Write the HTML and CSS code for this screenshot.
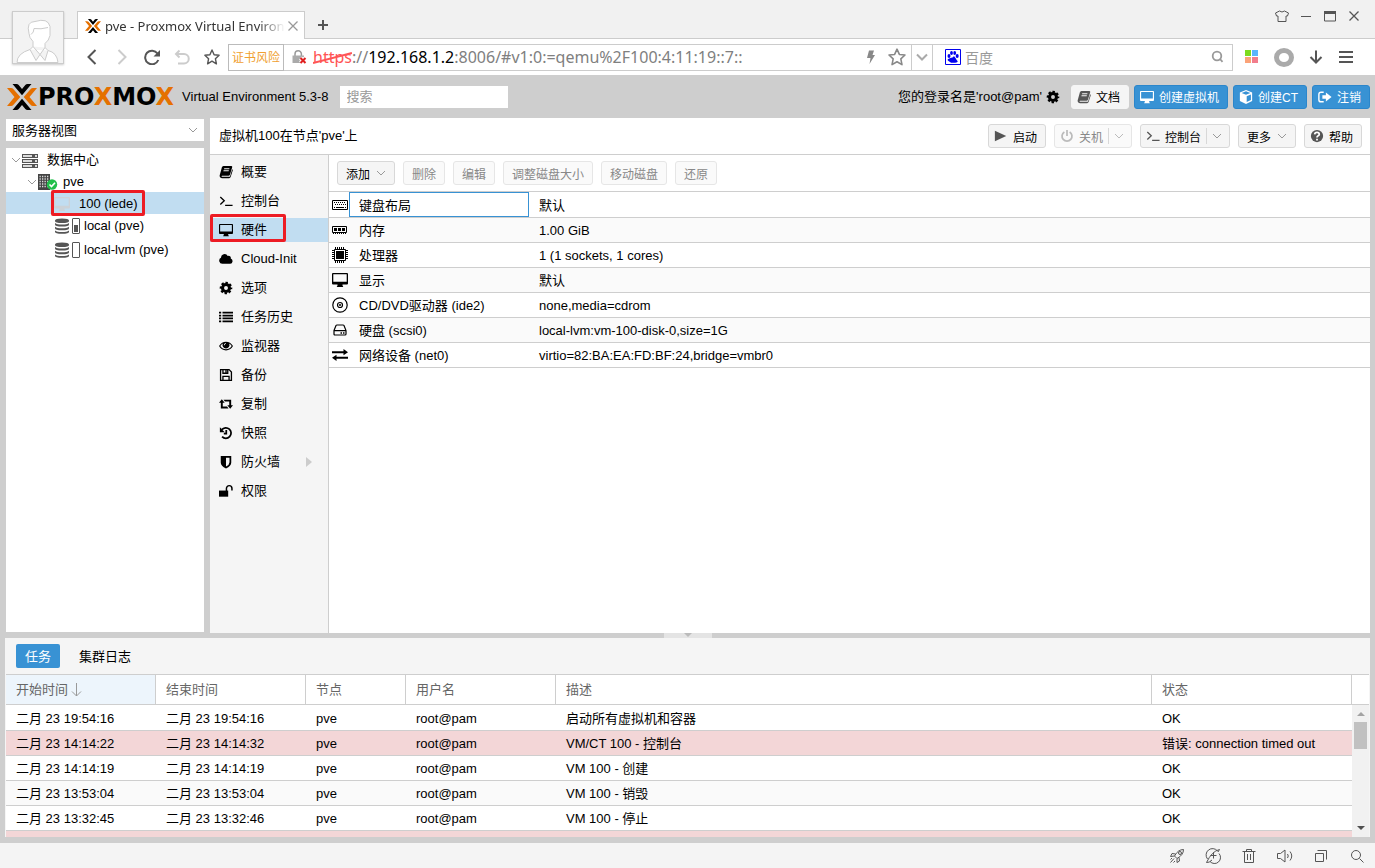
FILE: index.html
```html
<!DOCTYPE html>
<html lang="zh-CN">
<head>
    <meta charset="UTF-8">
    <meta name="viewport" content="width=device-width, initial-scale=1.0">
    <title>pve - Proxmox Virtual Environment</title>
    <link rel="stylesheet" href="styles.css">
</head>
<body>
    <!-- icon sprite -->
    <svg class="sprite" aria-hidden="true">
        <symbol id="i-logo" viewBox="0 0 30 26">
            <path fill="#e57000" d="M0 4H4Q5.500 4 6.500 5.200L13.300 13L6.500 20.800Q5.500 22 4 22H0L7.500 13zM30 4H26Q24.500 4 23.500 5.200L16.700 13L23.500 20.800Q24.500 22 26 22H30L22.500 13z"/>
            <path fill="#000" d="M5.500 0H9.500Q10.800 0 11.700 1L15 5L18.300 1Q19.200 0 20.500 0H24.500L15 11.300zM5.500 26H9.500Q10.800 26 11.700 25L15 21L18.300 25Q19.200 26 20.500 26H24.500L15 14.700z"/>
        </symbol>
        <symbol id="i-down" viewBox="0 0 12 12"><path fill="none" stroke="currentColor" d="M2 4l4 4 4-4"/></symbol>
        <symbol id="i-book" viewBox="0 0 16 16"><path fill-rule="evenodd" d="M5 1h9.200q1.300.2.900 1.600l-2.600 8.400q-.4 1.200-1.600 1.200H3.600q-.8.1-.7.7.2.6 1.100.6h7.800q.6 0 .9-.6l2.400-8q.9.4.6 1.500l-2.400 7.400q-.5 1.200-1.700 1.200H3.400q-2 0-2.600-1.900-.2-.7 0-1.400L3.400 2.400Q3.800 1.200 5 1zM6 3.800l-.3 1h6l.3-1zM5.300 6.100l-.3 1h6l.3-1z"/></symbol>
        <symbol id="i-terminal" viewBox="0 0 16 16"><path fill="none" stroke="currentColor" stroke-width="1.500" d="M1.500 3.500L6 7.800L1.500 12M7 13h8.500"/></symbol>
        <symbol id="i-desktop" viewBox="0 0 16 16"><path fill-rule="evenodd" d="M1 1h14a1 1 0 0 1 1 1v9.500a1 1 0 0 1-1 1h-4.500v1l.8 1.500H4.700l.8-1.500v-1H1a1 1 0 0 1-1-1V2a1 1 0 0 1 1-1zM1.300 2.300v7.500h13.400V2.300z"/></symbol>
        <symbol id="i-cloud" viewBox="0 0 16 16"><path d="M3.800 13.500A3.600 3.600 0 0 1 2.200 6.700A4.200 4.200 0 0 1 10 4.500A2.500 2.500 0 0 1 13.400 7.500A3.100 3.100 0 0 1 12.800 13.500z"/></symbol>
        <symbol id="i-gear" viewBox="0 0 16 16"><g fill="none" stroke="currentColor"><circle cx="8" cy="8" r="4" stroke-width="3.500"/><circle cx="8" cy="8" r="6" stroke-width="2.400" stroke-dasharray="2.700 2.012" stroke-dashoffset="1.350"/></g></symbol>
        <symbol id="i-list" viewBox="0 0 16 16"><path d="M0 2h2.500v2H0zM4 2h12v2H4zM0 5.300h2.500v2H0zM4 5.300h12v2H4zM0 8.600h2.500v2H0zM4 8.600h12v2H4zM0 12h2.500v2H0zM4 12h12v2H4z"/></symbol>
        <symbol id="i-eye" viewBox="0 0 16 16"><path fill-rule="evenodd" d="M8 3Q13 3 16 8Q13 13 8 13T0 8Q3 3 8 3zM1.500 8Q4 11.800 8 11.800T14.500 8Q13.300 6 11.500 5A4 4 0 1 1 4.500 5Q2.700 6 1.500 8zM8 4.500A2.700 2.700 0 0 0 5.500 7.200h1A1.800 1.800 0 0 1 8 5.500z"/></symbol>
        <symbol id="i-save" viewBox="0 0 16 16"><path fill="none" stroke="currentColor" stroke-width="1.500" d="M1.800 1.800h9.700l2.700 2.700v9.700H1.800zM4.500 14V9.500h7V14M4.500 2v4h5.500V2M8 2.500v2.500"/></symbol>
        <symbol id="i-retweet" viewBox="0 0 16 16"><path d="M3.200 2.500L6.500 6.500H4.300V10.800H9.200L10.900 13H2.100V6.500H0zM12.800 13.500L9.500 9.500H11.700V5.200H6.800L5.100 3H13.900V9.500H16z"/></symbol>
        <symbol id="i-history" viewBox="0 0 16 16"><path fill="none" stroke="currentColor" stroke-width="2" d="M3.200 4.200A6 6 0 1 1 3.500 12.200M8.300 4.500V8.700H5.500"/><path d="M1 1.500V7h5.500z"/></symbol>
        <symbol id="i-shield" viewBox="0 0 16 16"><path fill-rule="evenodd" d="M2 1h12v7.500Q14 12.500 8 15.500Q2 12.500 2 8.500zM8 3v10.200Q12 11 12 8.300V3z"/></symbol>
        <symbol id="i-unlock" viewBox="0 0 16 16"><path d="M0 7.500h10.500V14.500H0z"/><path fill="none" stroke="currentColor" stroke-width="1.700" d="M8.500 8V5A3 3 0 0 1 14.800 5V7.500"/></symbol>
        <symbol id="i-play" viewBox="0 0 16 16"><path d="M1 2L14 8L1 14z"/></symbol>
        <symbol id="i-power" viewBox="0 0 16 16"><path fill="none" stroke="currentColor" stroke-width="2" d="M5 3.300A5.700 5.700 0 1 0 11 3.300M8 1V8"/></symbol>
        <symbol id="i-help" viewBox="0 0 16 16"><circle cx="8" cy="8" r="7"/><path fill="none" stroke="#fff" stroke-width="2" d="M5.300 6.200Q5.500 3.800 8 3.800T10.600 6Q10.600 7.200 9 8Q8 8.500 8 9.800M8 11v2"/></symbol>
        <symbol id="i-cube" viewBox="0 0 16 16"><path fill-rule="evenodd" d="M8 0L15 2.800V12.500L8 16L1 12.500V2.800zM8 1.500L3 3.500L8 5.500L13 3.500zM8.800 7V13.800L13.600 11.500V5z"/></symbol>
        <symbol id="i-logout" viewBox="0 0 16 16"><path fill="none" stroke="currentColor" stroke-width="1.600" d="M6.500 2.500H3.500Q1 2.500 1 5V11Q1 13.500 3.500 13.500H6.500"/><path d="M5 6h4V2.800L15.500 8L9 13.200V10H5z"/></symbol>
        <symbol id="i-server" viewBox="0 0 16 16"><path fill="#555" d="M0 2h16v4H0zM0 7h16v4H0zM0 12h16v4H0z"/><path fill="#ddd" d="M1 3h9v2H1zM1 8h9v2H1zM1 13h9v2H1zM13 3h2v2h-2zM13 8h2v2h-2zM13 13h2v2h-2z"/></symbol>
        <symbol id="i-node" viewBox="0 0 20 16"><path fill="#444" d="M0 0h12v16H0z"/><path stroke="#ddd" stroke-width="1.300" stroke-dasharray="1.300 1.200" d="M1.500 2.500h9.500M1.500 5h9.500M1.500 7.500h9.500M1.500 10h9.500M1.500 12.500h9.500"/><circle cx="14" cy="10.500" r="5.200" fill="#21bf4b"/><path fill="none" stroke="#fff" stroke-width="1.600" d="M11.500 10.500l2 2 3.500-3.800"/></symbol>
        <symbol id="i-db" viewBox="0 0 16 16"><path fill="#555" d="M1 2.500Q1 .5 8 .5T15 2.500V3Q15 5 8 5T1 3zM1 5Q3 6.500 8 6.500T15 5V6.500Q15 8.500 8 8.500T1 6.500zM1 8.700Q3 10.200 8 10.200T15 8.700V10.200Q15 12.200 8 12.200T1 10.200zM1 12.400Q3 13.900 8 13.900T15 12.400V13.800Q15 15.800 8 15.800T1 13.800z"/></symbol>
        <symbol id="i-keyboard" viewBox="0 0 16 16"><path fill="none" stroke="currentColor" d="M.5 3.500h15v9H.5zM4 10.500h8"/><path stroke="currentColor" stroke-dasharray="1 1" d="M2 5.500h12M3 7.500h11"/><path d="M2 10h1v1H2zM13 10h1v1h-1z"/></symbol>
        <symbol id="i-memory" viewBox="0 0 16 16"><path fill="none" stroke="currentColor" d="M.5 4.500h14v6H.5z"/><path d="M2 6h3v3H2zM6 6h3v3H6zM10 6h3v3h-3z"/><path stroke="currentColor" stroke-dasharray="1 1" d="M1 11.500h14"/></symbol>
        <symbol id="i-cpu" viewBox="0 0 16 16"><path fill="none" stroke="currentColor" d="M2.500 2.500h11v11h-11z"/><path d="M4 4h8v8H4z"/><g stroke="currentColor" stroke-width="2" stroke-dasharray="1 1"><path d="M3 1h10M3 15h10M1 3v10M15 3v10"/></g></symbol>
        <symbol id="i-cd" viewBox="0 0 16 16"><g fill="none" stroke="currentColor" stroke-width="1.200"><circle cx="8" cy="8" r="7.200"/><circle cx="8" cy="8" r="2.500"/></g><circle cx="8" cy="8" r="1"/></symbol>
        <symbol id="i-hdd" viewBox="0 0 16 16"><path fill="none" stroke="currentColor" stroke-width="1.200" d="M2 8.500L4 3.500Q4.300 3 5 3H11Q11.700 3 12 3.500L14 8.500V12Q14 13 13 13H3Q2 13 2 12zM2 8.700H14"/><path d="M8.500 10.300H10v1.400H8.500zM11 10.300h1.500v1.400H11z"/></symbol>
        <symbol id="i-exchange" viewBox="0 0 16 16"><path d="M0 4.200H11.500V2L16 5.200L11.500 8.300V6.200H0zM16 9.800H4.500V7.700L0 10.800L4.500 14V11.800H16z"/></symbol>
        <symbol id="i-star" viewBox="0 0 16 16"><path fill="none" stroke="currentColor" stroke-width="1.400" stroke-linejoin="round" d="M8 1l2.100 4.700 5 .5-3.700 3.500 1 5.100L8 12.200l-4.400 2.600 1-5.100L.9 6.200l5-.5z"/></symbol>
        <symbol id="i-search" viewBox="0 0 16 16"><g fill="none" stroke="currentColor" stroke-width="1.800"><circle cx="7" cy="7" r="4.300"/><path d="M10 10L12.500 12.800"/></g></symbol>
        <symbol id="i-close" viewBox="0 0 16 16"><path fill="none" stroke="currentColor" stroke-width="1.300" d="M3.500 3.500l9 9M12.500 3.500l-9 9"/></symbol>
    </svg>

    <!-- browser chrome -->
    <header class="chrome">
        <div class="avatar">
            <svg viewBox="0 0 50 50"><path fill="#fff" stroke="#ccc" d="M4 50Q4 41 17 37L20 34V29Q16 25 16 21Q13 9 22 9Q35 5 37 14V23Q36 28 32 31V35L35 38Q44 40 45 50zM18 22Q21 20 21 16Q28 17 35 15M20 34L27 42L32 35M17 37L23 48L27 42L32 48L35 38"/></svg>
        </div>
        <div class="tab-strip">
            <div class="tab">
                <svg class="ico"><use href="#i-logo"/></svg>
                <span class="tab-title">pve - Proxmox Virtual Environ</span>
                <button class="plain tab-close" aria-label="关闭标签"><svg class="ico"><use href="#i-close"/></svg></button>
            </div>
            <button class="plain new-tab" aria-label="新标签"><svg class="ico" viewBox="0 0 16 16"><path stroke="currentColor" stroke-width="2" d="M8 3v10M3 8h10"/></svg></button>
            <div class="win-buttons">
                <button class="plain" aria-label="皮肤"><svg class="ico" viewBox="0 0 16 16"><path fill="none" stroke="currentColor" d="M5.500 3Q8 5 10.500 3L14.500 5L13.500 8H12V13.500H4V8H2.500L1.500 5z"/></svg></button>
                <button class="plain" aria-label="最小化"><svg class="ico" viewBox="0 0 16 16"><path stroke="currentColor" d="M3 8.500h10"/></svg></button>
                <button class="plain" aria-label="最大化"><svg class="ico" viewBox="0 0 16 16"><path fill="none" stroke="currentColor" d="M2.500 4v9h11V4"/><path d="M2 3h12v3H2z"/></svg></button>
                <button class="plain" aria-label="关闭"><svg class="ico"><use href="#i-close"/></svg></button>
            </div>
        </div>
        <div class="nav-bar">
            <div class="nav-buttons">
                <button class="plain" aria-label="后退"><svg class="ico" viewBox="0 0 16 16"><path fill="none" stroke="currentColor" stroke-width="2" d="M11.500 1L4.500 8L11.500 15"/></svg></button>
                <button class="plain faint" aria-label="前进"><svg class="ico" viewBox="0 0 16 16"><path fill="none" stroke="currentColor" stroke-width="2" d="M4.500 1L11.500 8L4.500 15"/></svg></button>
                <button class="plain" aria-label="刷新"><svg class="ico" viewBox="0 0 16 16"><path fill="none" stroke="currentColor" stroke-width="2" d="M13.500 4.500A6.800 6.800 0 1 0 14.300 11"/><path d="M16 1v6.500H9.500z"/></svg></button>
                <button class="plain faint" aria-label="恢复"><svg class="ico" viewBox="0 0 16 16"><path fill="none" stroke="currentColor" stroke-width="2" d="M5.500 1.500L2 5L5.500 8.500M2 5H10A4.500 4.500 0 0 1 10 14.500H4"/></svg></button>
                <button class="plain" aria-label="收藏"><svg class="ico"><use href="#i-star"/></svg></button>
            </div>
            <div class="url-box">
                <span class="cert">证书风险</span>
                <svg class="ico lock" viewBox="0 0 16 16"><path fill="none" stroke="#999" stroke-width="1.500" d="M4 8V5A3.200 3.200 0 0 1 10.400 5V8"/><path fill="#aaa" d="M1.500 6.500h11.500V14H1.500z"/><path fill="none" stroke="#fff" stroke-width="4" d="M9.500 9l5 5M14.500 9l-5 5"/><path fill="none" stroke="#e02020" stroke-width="2" d="M9.500 9l5 5M14.500 9l-5 5"/></svg>
                <div class="url" role="textbox" contenteditable="true" spellcheck="false"><span class="scheme">https<svg class="strike" viewBox="0 0 40 14" preserveAspectRatio="none"><path stroke="#f55" stroke-width="2" d="M0 12L40 2"/></svg></span>://<b>192.168.1.2</b>:8006/#v1:0:=qemu%2F100:4:11:19::7::</div>
                <svg class="ico bolt" viewBox="0 0 16 16"><path d="M6 1.500h5L9.500 6H12L6.500 15L7.500 9H4z"/></svg>
                <svg class="ico url-star"><use href="#i-star"/></svg>
                <button class="plain url-menu" aria-label="地址列表"><svg class="ico" viewBox="0 0 16 16"><path fill="none" stroke="currentColor" stroke-width="2" d="M3 5.500l5 5 5-5"/></svg></button>
            </div>
            <label class="web-search">
                <svg class="ico" viewBox="0 0 16 16"><path fill="none" stroke="#00e" d="M.5.5h15v15H.5z"/><g fill="#00e"><ellipse cx="4" cy="7" rx="1.500" ry="2"/><ellipse cx="6.500" cy="4" rx="1.400" ry="1.900"/><ellipse cx="9.700" cy="4" rx="1.400" ry="1.900"/><ellipse cx="12.200" cy="7" rx="1.500" ry="2"/><path d="M8 7Q9.500 7 10.500 9T12.500 12T10 13.800H6T3.500 12T5.500 9T8 7z"/></g></svg>
                <input type="text" placeholder="百度">
                <svg class="ico"><use href="#i-search"/></svg>
            </label>
            <div class="nav-tools">
                <button class="plain" aria-label="应用"><svg class="ico" viewBox="0 0 16 16"><path fill="#7ddb1e" d="M1 1h6v6H1z"/><path fill="#5bb5fb" d="M8 1h6v6H8z"/><path fill="#fba378" d="M1 8h6v6H1z"/><path fill="#f27d8c" d="M8 8h6v6H8z"/></svg></button>
                <button class="plain ring" aria-label="账户"></button>
                <button class="plain" aria-label="下载"><svg class="ico" viewBox="0 0 16 16"><path fill="none" stroke="currentColor" stroke-width="2" d="M8 1.500V13.500M2.500 8L8 13.500L13.500 8"/></svg></button>
                <button class="plain" aria-label="菜单"><svg class="ico" viewBox="0 0 16 16"><path stroke="currentColor" stroke-width="2" d="M1 3h14M1 8h14M1 13h14"/></svg></button>
            </div>
        </div>
    </header>

    <div class="app">
        <div class="app-header">
            <svg class="logo-mark"><use href="#i-logo"/></svg>
            <span class="logo-text">PRO<i>X</i>MO<i>X</i></span>
            <span class="version">Virtual Environment 5.3-8</span>
            <input class="search" type="text" placeholder="搜索" aria-label="搜索">
            <span class="login">您的登录名是'root@pam'</span>
            <svg class="ico gear"><use href="#i-gear"/></svg>
            <div class="header-buttons">
                <button class="btn flat"><svg class="ico"><use href="#i-book"/></svg>文档</button>
                <button class="btn primary"><svg class="ico"><use href="#i-desktop"/></svg>创建虚拟机</button>
                <button class="btn primary"><svg class="ico"><use href="#i-cube"/></svg>创建CT</button>
                <button class="btn primary"><svg class="ico"><use href="#i-logout"/></svg>注销</button>
            </div>
        </div>

        <div class="workspace">
            <!-- resource tree -->
            <aside class="side">
                <div class="combo">
                    <select aria-label="视图"><option>服务器视图</option></select>
                    <svg class="chev"><use href="#i-down"/></svg>
                </div>
                <ul class="tree">
                    <li class="node"><svg class="chev"><use href="#i-down"/></svg><span class="node-icon"><svg class="ico"><use href="#i-server"/></svg></span>数据中心</li>
                    <li class="node level-1"><svg class="chev"><use href="#i-down"/></svg><span class="node-icon"><svg class="ico wide"><use href="#i-node"/></svg></span>pve</li>
                    <li class="node level-2 selected"><span class="node-icon vm-off"><svg class="ico"><use href="#i-desktop"/></svg></span>100 (lede)<span class="mark"></span></li>
                    <li class="node level-2 storage"><span class="node-icon"><svg class="ico"><use href="#i-db"/></svg><span class="usage"><span class="usage-fill" style="height: 55%"></span></span></span>local (pve)</li>
                    <li class="node level-2 storage"><span class="node-icon"><svg class="ico"><use href="#i-db"/></svg><span class="usage"></span></span>local-lvm (pve)</li>
                </ul>
            </aside>

            <!-- vm panel -->
            <main class="panel">
                <div class="panel-title">
                    <span>虚拟机100在节点'pve'上</span>
                    <div class="panel-buttons">
                        <button class="btn"><svg class="ico"><use href="#i-play"/></svg>启动</button>
                        <button class="btn" disabled><svg class="ico"><use href="#i-power"/></svg>关机<span class="split"><svg class="chev"><use href="#i-down"/></svg></span></button>
                        <button class="btn"><svg class="ico"><use href="#i-terminal"/></svg>控制台<span class="split"><svg class="chev"><use href="#i-down"/></svg></span></button>
                        <button class="btn text">更多<svg class="chev"><use href="#i-down"/></svg></button>
                        <button class="btn"><svg class="ico"><use href="#i-help"/></svg>帮助</button>
                    </div>
                </div>
                <div class="panel-body">
                    <nav class="menu">
                        <a href="#"><svg class="ico"><use href="#i-book"/></svg>概要</a>
                        <a href="#"><svg class="ico"><use href="#i-terminal"/></svg>控制台</a>
                        <a href="#" class="selected"><svg class="ico"><use href="#i-desktop"/></svg>硬件<span class="mark"></span></a>
                        <a href="#"><svg class="ico"><use href="#i-cloud"/></svg>Cloud-Init</a>
                        <a href="#"><svg class="ico"><use href="#i-gear"/></svg>选项</a>
                        <a href="#"><svg class="ico"><use href="#i-list"/></svg>任务历史</a>
                        <a href="#"><svg class="ico"><use href="#i-eye"/></svg>监视器</a>
                        <a href="#"><svg class="ico"><use href="#i-save"/></svg>备份</a>
                        <a href="#"><svg class="ico"><use href="#i-retweet"/></svg>复制</a>
                        <a href="#"><svg class="ico"><use href="#i-history"/></svg>快照</a>
                        <a href="#"><svg class="ico"><use href="#i-shield"/></svg>防火墙<span class="more"></span></a>
                        <a href="#"><svg class="ico"><use href="#i-unlock"/></svg>权限</a>
                    </nav>
                    <section class="hardware">
                        <div class="toolbar">
                            <button class="btn text">添加<svg class="chev"><use href="#i-down"/></svg></button>
                            <button class="btn text" disabled>删除</button>
                            <button class="btn text" disabled>编辑</button>
                            <button class="btn text" disabled>调整磁盘大小</button>
                            <button class="btn text" disabled>移动磁盘</button>
                            <button class="btn text" disabled>还原</button>
                        </div>
                        <table class="hw-table">
                            <tr><td class="hw-icon"><svg class="ico"><use href="#i-keyboard"/></svg></td><td class="hw-name focused">键盘布局</td><td>默认</td></tr>
                            <tr><td class="hw-icon"><svg class="ico"><use href="#i-memory"/></svg></td><td class="hw-name">内存</td><td>1.00 GiB</td></tr>
                            <tr><td class="hw-icon"><svg class="ico"><use href="#i-cpu"/></svg></td><td class="hw-name">处理器</td><td>1 (1 sockets, 1 cores)</td></tr>
                            <tr><td class="hw-icon"><svg class="ico"><use href="#i-desktop"/></svg></td><td class="hw-name">显示</td><td>默认</td></tr>
                            <tr><td class="hw-icon"><svg class="ico"><use href="#i-cd"/></svg></td><td class="hw-name">CD/DVD驱动器 (ide2)</td><td>none,media=cdrom</td></tr>
                            <tr><td class="hw-icon"><svg class="ico"><use href="#i-hdd"/></svg></td><td class="hw-name">硬盘 (scsi0)</td><td>local-lvm:vm-100-disk-0,size=1G</td></tr>
                            <tr><td class="hw-icon"><svg class="ico"><use href="#i-exchange"/></svg></td><td class="hw-name">网络设备 (net0)</td><td>virtio=82:BA:EA:FD:BF:24,bridge=vmbr0</td></tr>
                        </table>
                    </section>
                </div>
            </main>
        </div>

        <div class="splitter"><span class="grip"></span></div>

        <!-- task log -->
        <section class="log">
            <div class="log-tabs">
                <button class="log-tab active">任务</button>
                <button class="log-tab">集群日志</button>
            </div>
            <div class="log-grid">
                <div class="log-rows">
                    <table class="log-table">
                        <thead>
                            <tr>
                                <th class="col-time sorted">开始时间<svg class="sort" viewBox="0 0 12 14"><path fill="none" stroke="currentColor" d="M6.500 0v13M2 8.500L6.500 13l4.500-4.500"/></svg></th>
                                <th class="col-time">结束时间</th>
                                <th class="col-node">节点</th>
                                <th class="col-user">用户名</th>
                                <th>描述</th>
                                <th class="col-status">状态</th>
                            </tr>
                        </thead>
                        <tbody>
                            <tr><td>二月 23 19:54:16</td><td>二月 23 19:54:16</td><td>pve</td><td>root@pam</td><td>启动所有虚拟机和容器</td><td>OK</td></tr>
                            <tr class="error"><td>二月 23 14:14:22</td><td>二月 23 14:14:32</td><td>pve</td><td>root@pam</td><td>VM/CT 100 - 控制台</td><td>错误: connection timed out</td></tr>
                            <tr><td>二月 23 14:14:19</td><td>二月 23 14:14:19</td><td>pve</td><td>root@pam</td><td>VM 100 - 创建</td><td>OK</td></tr>
                            <tr><td>二月 23 13:53:04</td><td>二月 23 13:53:04</td><td>pve</td><td>root@pam</td><td>VM 100 - 销毁</td><td>OK</td></tr>
                            <tr><td>二月 23 13:32:45</td><td>二月 23 13:32:46</td><td>pve</td><td>root@pam</td><td>VM 100 - 停止</td><td>OK</td></tr>
                            <tr class="error"><td></td><td></td><td></td><td></td><td></td><td></td></tr>
                        </tbody>
                    </table>
                </div>
                <div class="scroll-col">
                    <div class="scroll-head"></div>
                    <div class="scrollbar"><span class="arrow-up"></span><span class="thumb"></span><span class="arrow-down"></span></div>
                </div>
            </div>
        </section>
    </div>

    <footer class="status-bar">
        <button class="plain" aria-label="加速"><svg class="ico" viewBox="0 0 16 16"><path fill="none" stroke="currentColor" d="M14.500 1.500Q9 1.500 5.500 8L8 10.500Q14.500 7 14.500 1.500zM6.500 6L3 5.500L1.500 8.500L5.500 8M10 9.500L10.500 13L8 14.500L8 10.500M5 10.500L1.500 14.500M3 10L1.500 11.500M6 13L4.500 14.500"/><circle cx="11" cy="5" r="1.500" fill="none" stroke="currentColor"/></svg></button>
        <button class="plain" aria-label="浏览医生"><svg class="ico" viewBox="0 0 16 16"><path fill="none" stroke="currentColor" d="M12.500 3A6 6 0 0 0 2.500 11M14 5.500A6 6 0 0 1 5 13.500M1.500 14.500Q7 3 14.500 1.500L13 4M8.500 4.500v6M5.500 7.500h6M1.500 14.500Q4 15 7 12"/></svg></button>
        <button class="plain" aria-label="清理"><svg class="ico" viewBox="0 0 16 16"><path fill="none" stroke="currentColor" d="M1.500 3.500h13M5.500 3V1.500h5V3M3.500 3.500v11h9v-11M6.500 6v6M9.500 6v6"/></svg></button>
        <button class="plain" aria-label="声音"><svg class="ico" viewBox="0 0 16 16"><path fill="none" stroke="currentColor" d="M.5 5.500h3L8 2v12L3.500 10.500h-3zM10.500 6Q12 8 10.500 10M13 3.500Q16.500 8 13 12.500"/></svg></button>
        <button class="plain" aria-label="窗口"><svg class="ico" viewBox="0 0 16 16"><path fill="none" stroke="currentColor" d="M2.500 5.500h8v8h-8zM4.500 2.500h9v9"/></svg></button>
        <button class="plain" aria-label="缩放"><svg class="ico" viewBox="0 0 16 16"><path fill="none" stroke="currentColor" d="M10.500 10.500L14.500 14.500"/><circle cx="7" cy="7" r="4.500" fill="none" stroke="currentColor"/></svg></button>
    </footer>
</body>
</html>
```
FILE: styles.css
```css
* {
    margin: 0;
    padding: 0;
    box-sizing: border-box;
}

body {
    display: flex;
    flex-direction: column;
    height: 100vh;
    min-height: 600px;
    overflow: hidden;
    font-family: "Liberation Sans", "Noto Sans CJK SC", sans-serif;
    font-size: 13px;
    line-height: 20px;
    color: #000;
    background-color: #cecece;
}

button, input, select {
    font-family: inherit;
    font-size: inherit;
}

.sprite {
    position: absolute;
    width: 0;
    height: 0;
}

.ico {
    flex: none;
    width: 16px;
    height: 16px;
    fill: currentColor;
}

.chev {
    flex: none;
    width: 12px;
    height: 12px;
    color: #999;
}

.plain {
    display: flex;
    align-items: center;
    justify-content: center;
    border: none;
    background: none;
    color: #555;
}

/* browser chrome */
.chrome {
    position: relative;
    flex: none;
    font-family: "Noto Sans", "Noto Sans CJK SC", sans-serif;
    background-color: #fff;
}

.avatar {
    position: absolute;
    left: 12px;
    top: 11px;
    width: 52px;
    height: 53px;
    border: 1px solid #ccc;
    background-color: #f3f3f3;
    box-shadow: 0 1px 2px rgba(0, 0, 0, 0.2);
}

.avatar svg {
    display: block;
    width: 50px;
    height: 51px;
}

.tab-strip {
    display: flex;
    align-items: flex-end;
    height: 39px;
    padding-left: 77px;
    background-color: #f1f1f1;
    box-shadow: inset 0 -1px #ccc;
}

.tab {
    display: flex;
    align-items: center;
    width: 228px;
    height: 28px;
    padding: 0 7px;
    border: 1px solid #ccc;
    border-bottom: none;
    background-color: #fff;
}

.tab-title {
    flex: 1;
    margin-left: 4px;
    white-space: nowrap;
    color: #333;
    -webkit-mask-image: linear-gradient(to right, #000 85%, transparent);
    mask-image: linear-gradient(to right, #000 85%, transparent);
}

.tab-close {
    color: #999;
}

.new-tab {
    width: 36px;
    height: 28px;
}

.win-buttons {
    display: flex;
    gap: 8px;
    margin-left: auto;
    padding-right: 13px;
    align-self: flex-start;
    padding-top: 8px;
}

.nav-bar {
    display: flex;
    align-items: center;
    height: 36px;
    padding-left: 84px;
}

.nav-buttons {
    display: flex;
    gap: 14px;
    width: 144px;
}

.faint {
    color: #ccc;
}

.url-box {
    display: flex;
    align-items: center;
    flex: 1;
    height: 27px;
    border: 1px solid #ccc;
    min-width: 0;
}

.cert {
    height: 27px;
    padding: 0 3px;
    border: 1px solid #bbb;
    margin-left: -1px;
    font-size: 12px;
    line-height: 25px;
    color: #f0a030;
}

.lock {
    margin: 0 6px 0 7px;
}

.url {
    flex: 1;
    overflow: hidden;
    white-space: nowrap;
    font-size: 16px;
    color: #808080;
}

.url b {
    font-weight: normal;
    color: #000;
}

.scheme {
    position: relative;
    color: #f55;
}

.strike {
    position: absolute;
    left: 0;
    top: 5px;
    width: 100%;
    height: 14px;
}

.bolt {
    margin-right: 9px;
    color: #888;
}

.url-star {
    width: 18px;
    height: 18px;
    margin-right: 5px;
    color: #888;
}

.url-menu {
    width: 21px;
    height: 25px;
    border-left: 1px solid #ccc;
    color: #aaa;
}

.web-search {
    display: flex;
    align-items: center;
    width: 300px;
    height: 27px;
    padding: 0 6px 0 12px;
    border: 1px solid #ccc;
    border-left: none;
    color: #999;
}

.web-search input {
    flex: 1;
    min-width: 0;
    margin-left: 4px;
    border: none;
    font-size: 14px;
}

.web-search input::placeholder {
    color: #999;
}

.nav-tools {
    display: flex;
    align-items: center;
    gap: 14px;
    padding: 0 21px 0 11px;
}

.ring {
    width: 20px;
    height: 19px;
    border: 5px solid #aaa;
    border-radius: 50%;
}

/* application */
.app {
    display: flex;
    flex-direction: column;
    flex: 1;
    min-height: 0;
    padding: 0 5px 6px;
}

.app-header {
    display: flex;
    align-items: center;
    flex: none;
    height: 43px;
}

.logo-mark {
    flex: none;
    width: 30px;
    height: 26px;
    margin-left: 2px;
}

.logo-text {
    margin-left: 1px;
    font-family: "DejaVu Sans", sans-serif;
    font-size: 24px;
    font-weight: bold;
}

.logo-text i {
    font-style: normal;
    color: #e57000;
}

.version {
    margin-left: 8px;
}

.search {
    width: 168px;
    height: 22px;
    margin-left: 11px;
    padding: 0 7px;
    border: none;
    background-color: #fff;
}

.search::placeholder {
    color: #999;
}

.login {
    margin-left: auto;
}

.gear {
    width: 14px;
    height: 14px;
    margin: 0 11px 0 4px;
}

.header-buttons {
    display: flex;
    gap: 5px;
}

.btn {
    display: flex;
    align-items: center;
    height: 24px;
    padding: 0 8px 0 5px;
    border: 1px solid #d8d8d8;
    border-radius: 3px;
    background-color: #f5f5f5;
    font-size: 12px;
    white-space: nowrap;
    color: #000;
}

.btn .ico {
    width: 14px;
    height: 14px;
    margin-right: 5px;
    color: #555;
}

.btn.text {
    padding: 0 8px;
}

.btn.text .chev {
    margin: 0 -1px 0 5px;
}

.btn:disabled {
    color: #888;
    border-color: #e6e6e6;
    background-color: #fafafa;
}

.btn:disabled .ico, .btn:disabled .chev {
    color: #bbb;
}

.btn.flat {
    border-color: #f5f5f5;
}

.btn.primary {
    border-color: #2b86cb;
    background-color: #3892d4;
    color: #fff;
}

.btn.primary .ico {
    color: #fff;
}

.split {
    display: flex;
    align-items: center;
    height: 16px;
    margin: 0 -2px 0 5px;
    padding-left: 4px;
    border-left: 1px solid #d8d8d8;
}

.workspace {
    display: flex;
    flex: 1;
    gap: 5px;
    min-height: 0;
}

.side {
    display: flex;
    flex-direction: column;
    gap: 7px;
    width: 200px;
    padding: 1px 1px;
}

.combo {
    display: grid;
    align-items: center;
    height: 22px;
    background-color: #fff;
}

.combo select, .combo .chev {
    grid-area: 1 / 1;
}

.combo select {
    height: 22px;
    padding: 0 6px;
    border: none;
    appearance: none;
    background: none;
}

.combo .chev {
    justify-self: end;
    margin-right: 5px;
    pointer-events: none;
}

.tree {
    flex: 1;
    list-style: none;
    background-color: #fff;
}

.node {
    position: relative;
    display: flex;
    align-items: center;
    height: 22px;
    padding-top: 1px;
    padding-left: 4px;
}

.node.level-1 {
    padding-left: 20px;
}

.node.level-2 {
    padding-left: 48px;
}

.node.storage {
    height: 24px;
    padding-top: 0;
}

.node-icon {
    display: flex;
    flex: none;
    align-items: center;
    gap: 2px;
    width: 25px;
}

.storage .node-icon {
    width: 30px;
}

.ico.wide {
    width: 20px;
}

.vm-off {
    color: #ccd2d8;
}

.usage {
    display: flex;
    align-items: flex-end;
    width: 8px;
    height: 16px;
    padding: 1px;
    border: 1px solid #555;
    border-radius: 1px;
}

.usage-fill {
    width: 100%;
    background-color: #555;
}

.selected {
    background-color: #c1ddf1;
}

/* red highlight frame */
.mark {
    position: absolute;
    border: 3px solid #ed1c24;
    border-radius: 2px;
}

.node .mark {
    left: 45px;
    top: -2px;
    width: 94px;
    height: 26px;
}

.menu .mark {
    left: 0;
    top: -4px;
    width: 76px;
    height: 28px;
}

.panel {
    display: flex;
    flex-direction: column;
    flex: 1;
    min-width: 0;
    background-color: #fff;
}

.panel-title {
    display: flex;
    align-items: center;
    justify-content: space-between;
    height: 37px;
    padding: 0 8px 0 9px;
    border-bottom: 1px solid #cecece;
}

.panel-buttons {
    display: flex;
    gap: 8px;
}

.panel-body {
    display: flex;
    flex: 1;
    min-height: 0;
}

.menu {
    display: flex;
    flex-direction: column;
    gap: 5px;
    width: 119px;
    padding-top: 5px;
    border-right: 1px solid #cecece;
    background-color: #f5f5f5;
}

.menu a {
    position: relative;
    display: flex;
    align-items: center;
    height: 24px;
    padding-left: 9px;
    color: #000;
    text-decoration: none;
}

.menu .ico {
    width: 14px;
    height: 14px;
    margin-right: 8px;
}

.more {
    margin: 0 16px 0 auto;
    border: 5px solid transparent;
    border-left: 6px solid #ccc;
    border-right: none;
}

.hardware {
    flex: 1;
    min-width: 0;
}

.toolbar {
    display: flex;
    align-items: center;
    gap: 8px;
    height: 37px;
    padding: 0 8px;
    border-bottom: 1px solid #cecece;
}

table {
    width: 100%;
    border-collapse: separate;
    border-spacing: 0;
    table-layout: fixed;
}

td {
    height: 25px;
    padding: 2px 10px 0;
    border-bottom: 1px solid #cecece;
    white-space: nowrap;
    line-height: 20px;
}

tr:first-child td {
    height: 26px;
}

tr:nth-child(even) td {
    background-color: #fafafa;
}

.hw-table .hw-icon {
    width: 20px;
    padding: 0 2px 0 3px;
}

.hw-icon .ico {
    display: block;
}

.hw-name {
    width: 180px;
}

.focused {
    box-shadow: inset 0 0 0 1px #3892d4;
}

.splitter {
    display: flex;
    justify-content: center;
    flex: none;
    height: 5px;
}

.grip {
    display: flex;
    justify-content: center;
    width: 48px;
    background-color: #e4e4e4;
}

.grip::after {
    content: "";
    height: 0;
    border: 4px solid transparent;
    border-top-color: #bbb;
    border-bottom: none;
}

/* task log */
.log {
    display: flex;
    flex-direction: column;
    flex: none;
    height: 199px;
    background-color: #f5f5f5;
}

.log-tabs {
    display: flex;
    align-items: center;
    flex: none;
    gap: 10px;
    height: 36px;
    padding: 0 11px;
}

.log-tab {
    height: 24px;
    padding: 0 9px 2px;
    border: none;
    border-radius: 2px;
    background: none;
    color: #000;
}

.log-tab.active {
    background-color: #3892d4;
    color: #fff;
}

.log-grid {
    display: flex;
    flex: 1;
    min-height: 0;
    margin: 0 1px;
    background-color: #fff;
}

.log-rows {
    flex: 1;
    min-width: 0;
    overflow: hidden;
}

.log-table th {
    height: 31px;
    padding: 0 10px;
    border: 1px solid #cecece;
    border-left: none;
    text-align: left;
    font-weight: normal;
    color: #666;
}

.log-table th.sorted {
    background-color: #edf5fc;
}

.sort {
    width: 12px;
    height: 14px;
    margin-left: 2px;
    vertical-align: middle;
    color: #999;
}

.col-time {
    width: 150px;
}

.col-node {
    width: 100px;
}

.col-user {
    width: 150px;
}

.col-status {
    width: 200px;
}

.log-table .error td {
    background-color: #f3d6d7;
}

.scroll-col {
    display: flex;
    flex-direction: column;
    width: 17px;
}

.scroll-head {
    height: 31px;
    border-top: 1px solid #cecece;
    border-bottom: 1px solid #cecece;
}

.scrollbar {
    display: flex;
    flex-direction: column;
    align-items: center;
    flex: 1;
    padding: 7px 0;
    background-color: #f1f1f1;
}

.arrow-up {
    border: 4px solid transparent;
    border-top: none;
    border-bottom-color: #a3a3a3;
}

.thumb {
    width: 13px;
    height: 27px;
    margin-top: 6px;
    background-color: #c1c1c1;
}

.arrow-down {
    margin-top: auto;
    border: 4px solid transparent;
    border-bottom: none;
    border-top-color: #505050;
}

.status-bar {
    display: flex;
    align-items: center;
    justify-content: flex-end;
    flex: none;
    gap: 20px;
    height: 25px;
    padding-right: 10px;
    background-color: #f4f4f4;
}
```
